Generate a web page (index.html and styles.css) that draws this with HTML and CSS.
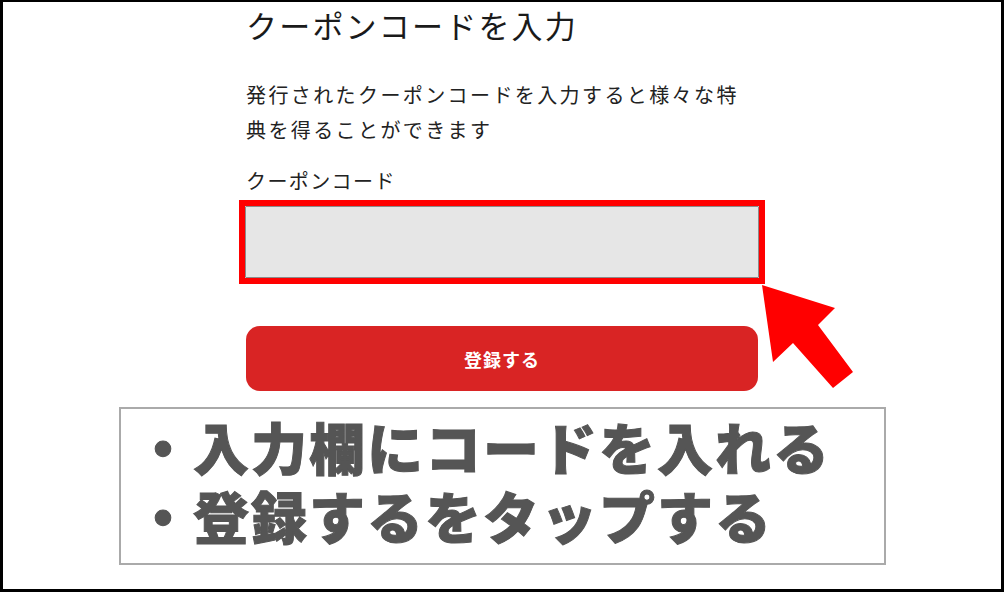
FILE: index.html
```html
<!DOCTYPE html>
<html lang="ja">
<head>
<meta charset="utf-8">
<title>クーポンコードを入力</title>
<link rel="stylesheet" href="styles.css">
</head>
<body>
<div class="frame">
  <div class="content">
    <h1 class="title">クーポンコードを入力</h1>
    <p class="desc">発行されたクーポンコードを入力すると様々な特典を得ることができます</p>
    <label class="label" for="code">クーポンコード</label>
    <div class="highlight">
      <input class="input" id="code" type="text">
    </div>
    <button class="btn" type="button">登録する</button>
  </div>
  <div class="note">
    <div class="note-line">・入力欄にコードを入れる</div>
    <div class="note-line">・登録するをタップする</div>
  </div>
  <svg class="arrow" viewBox="760 282 100 112" width="100" height="112" aria-hidden="true">
    <polygon points="762,285 835,308 818,325 853,372 833,388 793,343 773,362" fill="#ff0000"/>
  </svg>
</div>
</body>
</html>
```
FILE: styles.css
```css
* { box-sizing: border-box; }
html, body { margin: 0; padding: 0; background: #000; }
body {
  font-family: "Noto Sans CJK JP", "Noto Sans", sans-serif;
  color: #222;
}
.frame {
  position: relative;
  width: 1004px;
  height: 592px;
  background: #fff;
  border-style: solid;
  border-color: #000;
  border-width: 2px 3px 3px 3px;
  overflow: hidden;
}
.content {
  margin-left: 243px;
  width: 512px;
  display: flex;
  flex-direction: column;
}
.title {
  margin: 3px 0 0 0;
  font-size: 31px;
  font-weight: 400;
  line-height: 40px;
  letter-spacing: 2.2px;
  color: #1a1a1a;
}
.desc {
  margin: 32px 0 0 0;
  font-size: 20px;
  font-weight: 400;
  line-height: 35px;
  letter-spacing: 2.4px;
  color: #222;
}
.label {
  margin-top: 19px;
  font-size: 20px;
  font-weight: 400;
  line-height: 30px;
  letter-spacing: 1.4px;
  color: #222;
}
.highlight {
  margin-top: 4px;
  margin-left: -7px;
  width: 526px;
  height: 84px;
  border: 6px solid #ff0000;
}
.input {
  display: block;
  width: 100%;
  height: 100%;
  margin: 0;
  background: #e6e6e6;
  border: 1px solid #8c8c8c;
  border-radius: 1px;
}
.btn {
  margin-top: 42px;
  height: 65px;
  width: 512px;
  border: none;
  border-radius: 14px;
  background: #d92424;
  color: #fff;
  font-family: "Noto Sans CJK JP", "Noto Sans", sans-serif;
  font-size: 18px;
  font-weight: 700;
  letter-spacing: 1px;
  padding: 0;
}
.note {
  margin-top: 16px;
  margin-left: 116px;
  width: 767px;
  height: 158px;
  border: 2px solid #aaaaaa;
  padding: 2px 0 0 14px;
}
.note-line {
  font-size: 56px;
  font-weight: 900;
  line-height: 69px;
  letter-spacing: 2px;
  color: #555;
  white-space: nowrap;
  -webkit-text-stroke: 1px #555;
}
.arrow {
  position: absolute;
  left: 757px;
  top: 280px;
}
```
